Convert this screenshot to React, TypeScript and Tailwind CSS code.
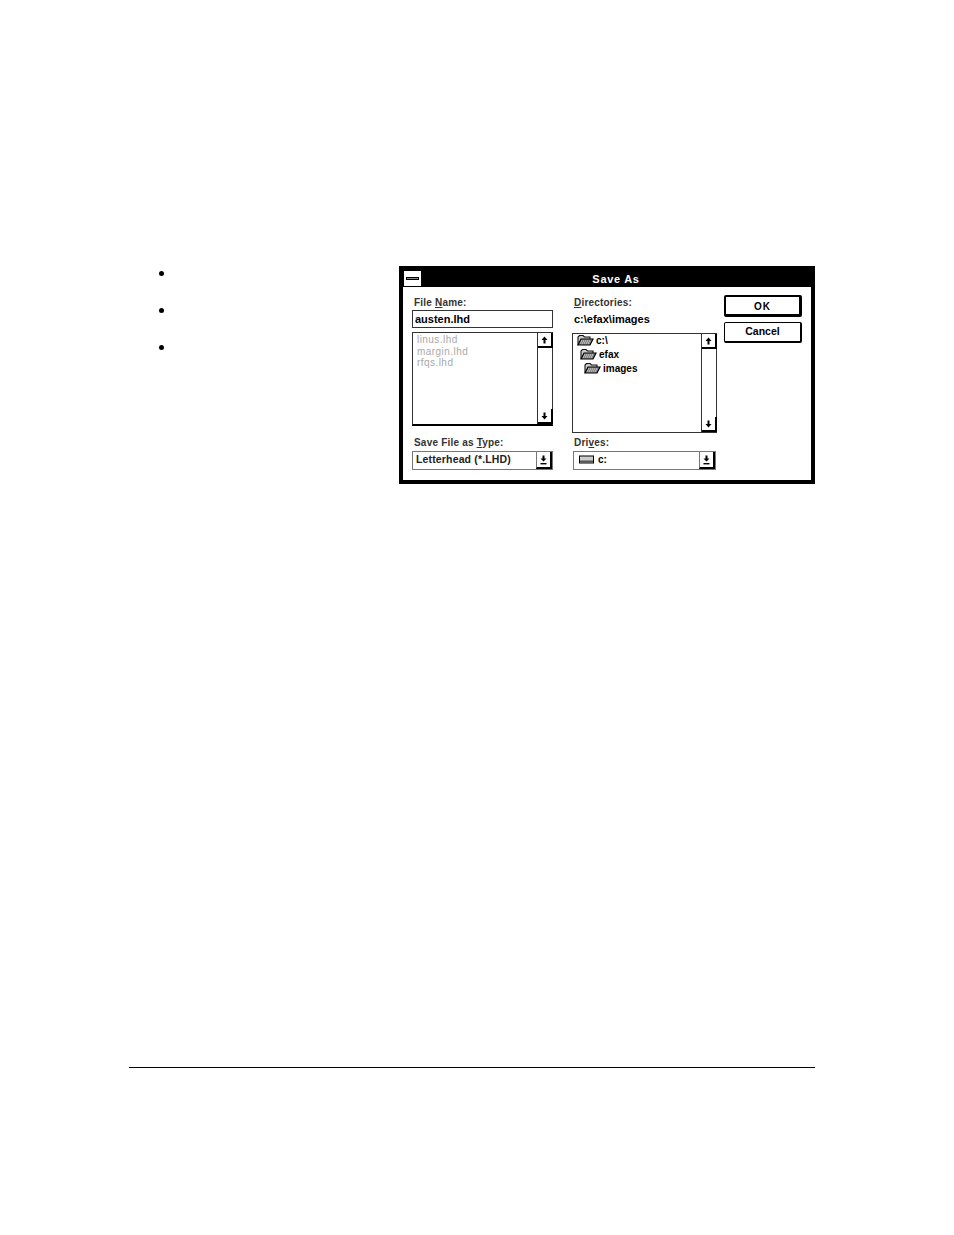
const sans = "font-['Liberation_Sans',Arial,sans-serif]";

function ArrowUp() {
  return (
    <svg width="7" height="8" viewBox="0 0 7 8">
      <path d="M3.5 0.5 L6.5 4 L4.5 4 L4.5 7.5 L2.5 7.5 L2.5 4 L0.5 4 Z" fill="#000" />
    </svg>
  );
}

function ArrowDown() {
  return (
    <svg width="7" height="8" viewBox="0 0 7 8">
      <path d="M3.5 7.5 L6.5 4 L4.5 4 L4.5 0.5 L2.5 0.5 L2.5 4 L0.5 4 Z" fill="#000" />
    </svg>
  );
}

function ArrowCombo() {
  return (
    <svg width="7" height="10" viewBox="0 0 7 10">
      <path d="M3.5 6.5 L6.5 3.5 L4.5 3.5 L4.5 0.5 L2.5 0.5 L2.5 3.5 L0.5 3.5 Z" fill="#000" />
      <rect x="0.5" y="8" width="6" height="1.4" fill="#000" />
    </svg>
  );
}

function ScrollButton({ children }: { children: React.ReactNode }) {
  return (
    <div className="flex h-[15px] w-[15px] items-center justify-center border-r-2 border-b-2 border-black bg-white">
      {children}
    </div>
  );
}

function Folder() {
  return (
    <svg width="17" height="11" viewBox="0 0 17 11" className="shrink-0">
      <path d="M1 10 L1 2 L2.5 0.5 L6 0.5 L7.5 2 L13 2 L13 4" fill="#ccc" stroke="#111" strokeWidth="1.1" />
      <path d="M1 10 L4 4 L16 4 L13 10 Z" fill="#888" stroke="#000" strokeWidth="1.2" />
      <path d="M4 6 L14 6 M3 8 L13 8" stroke="#eee" strokeWidth="0.8" strokeDasharray="1 1" />
    </svg>
  );
}

function Drive() {
  return (
    <svg width="15" height="9" viewBox="0 0 15 9" className="shrink-0">
      <rect x="0.5" y="1" width="14" height="7" fill="#ccc" stroke="#000" />
      <rect x="1" y="5.5" width="13" height="2" fill="#555" />
    </svg>
  );
}

function Combo({ children }: { children: React.ReactNode }) {
  return (
    <div className="flex h-[19px] items-center justify-between border border-[#777] bg-white">
      <div className="-mt-[2px] flex">{children}</div>
      <div className="flex h-full w-[16px] items-center justify-center border-l border-[#777] border-r-2 border-r-black border-b-2 border-b-black">
        <ArrowCombo />
      </div>
    </div>
  );
}

function Scrollbar() {
  return (
    <div className="flex h-full w-[15px] shrink-0 flex-col justify-between border-l border-[#333]">
      <ScrollButton>
        <ArrowUp />
      </ScrollButton>
      <ScrollButton>
        <ArrowDown />
      </ScrollButton>
    </div>
  );
}

function Label({ children }: { children: React.ReactNode }) {
  return <div className="h-[14px] pl-[2px] text-[10px] leading-[16px] font-bold tracking-[0.2px] text-[#333]">{children}</div>;
}

export default function App() {
  const files = ["linus.lhd", "margin.lhd", "rfqs.lhd"];
  const dirs = [
    { name: "c:\\", pad: "pl-[4px]" },
    { name: "efax", pad: "pl-[7px]" },
    { name: "images", pad: "pl-[11px]" },
  ];

  return (
    <div className={`${sans} h-[1235px] w-[954px] overflow-hidden bg-white text-black`}>
      <div className="flex pt-[266px]">
        <ul className="ml-[159px] flex w-[240px] flex-col gap-[32px] pt-[5px]">
          {[0, 1, 2].map((i) => (
            <li key={i} className="h-[5px] w-[5px] rounded-full bg-black" />
          ))}
        </ul>

        <div className="h-[218px] w-[416px] border-[4px] border-black bg-white">
          <div className="flex h-[17px] bg-black">
            <div className="ml-[1px] mt-[1px] flex h-[15px] w-[17px] items-center justify-center bg-white">
              <div className="h-[3px] w-[13px] border border-black bg-[#888]" />
            </div>
            <div className="flex-1 pt-[2px] text-center text-[11px] leading-[15px] font-bold tracking-[0.7px] text-white">
              Save As
            </div>
          </div>

          <div className="flex pl-[9px] pt-[8px]">
            <div className="w-[141px]">
              <Label>
                File <span className="underline">N</span>ame:
              </Label>
              <div className="mt-[1px] h-[18px] border border-[#333] pl-[2px] text-[11px] leading-[16px] font-bold">
                austen.lhd
              </div>
              <div className="mt-[4px] flex h-[94px] justify-between border border-[#333] border-b-2 border-b-black">
                <div className="pl-[4px] pt-[1px] text-[10px] leading-[11.5px] tracking-[0.45px] text-[#a8a8a8]">
                  {files.map((f) => (
                    <div key={f}>{f}</div>
                  ))}
                </div>
                <Scrollbar />
              </div>
              <div className="mt-[9px]">
                <Label>
                  Save File as <span className="underline">T</span>ype:
                </Label>
              </div>
              <div className="mt-[2px]">
                <Combo>
                  <span className="pl-[3px] text-[10.5px] font-bold tracking-[0.15px] text-[#222]">Letterhead (*.LHD)</span>
                </Combo>
              </div>
            </div>

            <div className="ml-[19px] w-[145px]">
              <Label>
                <span className="underline">D</span>irectories:
              </Label>
              <div className="mt-[2px] h-[17px] pl-[2px] text-[11px] leading-[16px] font-bold">c:\efax\images</div>
              <div className="mt-[5px] flex h-[100px] justify-between border border-[#333]">
                <div className="flex flex-col gap-[2px]">
                  {dirs.map((d) => (
                    <div key={d.name} className={`flex h-[12px] items-center gap-[2px] ${d.pad}`}>
                      <Folder />
                      <span className="text-[10px] font-bold">{d.name}</span>
                    </div>
                  ))}
                </div>
                <Scrollbar />
              </div>
              <div className="mt-[2px]">
                <Label>
                  Dri<span className="underline">v</span>es:
                </Label>
              </div>
              <div className="ml-[1px] mt-[2px] w-[143px]">
                <Combo>
                  <span className="flex items-center gap-[4px] pl-[5px] text-[10px] font-bold">
                    <Drive />
                    c:
                  </span>
                </Combo>
              </div>
            </div>

            <div className="ml-[7px] flex w-[78px] flex-col gap-[5px]">
              <button className="h-[22px] rounded-[2px] border-2 border-black border-r-[3px] border-b-[3px] pt-[1px] text-[10px] font-bold tracking-[1px]">
                OK
              </button>
              <button className="h-[21px] rounded-[2px] border border-black border-r-2 border-b-2 text-[10.5px] font-bold">
                Cancel
              </button>
            </div>
          </div>
        </div>
      </div>

      <hr className="ml-[129px] mt-[583px] w-[686px] border-t border-black" />
    </div>
  );
}
